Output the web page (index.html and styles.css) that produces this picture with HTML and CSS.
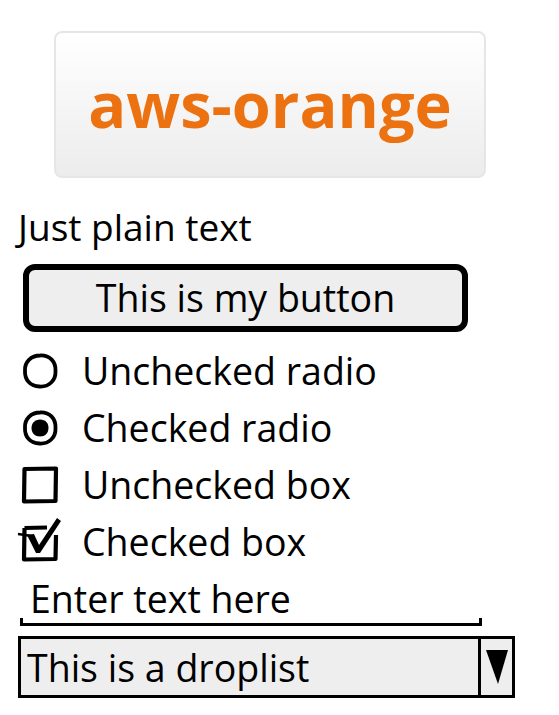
FILE: index.html
```html
<!DOCTYPE html>
<html>
<head>
<meta charset="utf-8">
<link rel="stylesheet" href="styles.css">
</head>
<body>
<div class="page">
  <div class="title-box"><span class="title">aws-orange</span></div>
  <div class="row plain">Just plain text</div>
  <div class="button">This is my button</div>
  <div class="row opt">
    <svg class="ico" width="40" height="40" viewBox="0 0 40 40"><path d="M20 4.5 C30 4 36 11 35.5 20 C36 29.5 29 36 19.5 35.5 C10.5 35.5 4.5 29 5 19.5 C4.5 11 11 4.5 20 4.5 Z" fill="none" stroke="#000" stroke-width="3.8"/></svg>
    <span>Unchecked radio</span>
  </div>
  <div class="row opt">
    <svg class="ico" width="40" height="40" viewBox="0 0 40 40"><path d="M20 4.5 C30 4 36 11 35.5 20 C36 29.5 29 36 19.5 35.5 C10.5 35.5 4.5 29 5 19.5 C4.5 11 11 4.5 20 4.5 Z" fill="none" stroke="#000" stroke-width="3.8"/><path d="M20 11.5 C25.5 11.5 28.5 15 28.5 20 C28.5 25 25 28.5 20 28.5 C15 28.5 11.5 25 11.5 20 C11.5 15 15 11.5 20 11.5 Z" fill="#000"/></svg>
    <span>Checked radio</span>
  </div>
  <div class="row opt">
    <svg class="ico" width="40" height="40" viewBox="0 0 40 40"><path d="M4.5 4 L36 3.5 L35.5 36 L4 36.5 Z" fill="none" stroke="#000" stroke-width="4.2" stroke-linejoin="round"/></svg>
    <span>Unchecked box</span>
  </div>
  <div class="row opt">
    <svg class="ico" width="40" height="40" viewBox="0 0 40 40" overflow="visible"><path d="M4.5 6 L27 5.5 M36 13 L35.5 37 L4 37.5 L4.5 6" fill="none" stroke="#000" stroke-width="4.2" stroke-linejoin="round"/><path d="M-2 12 L12 14" fill="none" stroke="#000" stroke-width="2.5"/><path d="M7 13 L14 12 L19 23 L37 -4 L41 -1 L20 31 L16 31 Z" fill="#000"/></svg>
    <span>Checked box</span>
  </div>
  <div class="field"><span>Enter text here</span></div>
  <div class="drop">
    <span class="drop-text">This is a droplist</span>
    <span class="drop-btn"><svg width="22" height="36" viewBox="0 0 22 36"><path d="M0 1 L22 1 L12 35 Z" fill="#000"/></svg></span>
  </div>
</div>
</body>
</html>
```
FILE: styles.css
```css
html, body {
  margin: 0;
  padding: 0;
  background: #fff;
}
body {
  font-family: "Open Sans", "Noto Sans", sans-serif;
  font-size: 37.5px;
  color: #000;
}
.page {
  width: 559px;
  height: 715px;
  overflow: hidden;
  display: flex;
  flex-direction: column;
  align-items: flex-start;
}
.title-box {
  margin: 31px 0 0 54px;
  width: 428px;
  height: 143px;
  border: 2px solid #e6e6e6;
  border-radius: 8px;
  background: linear-gradient(#ffffff, #ececec);
  display: flex;
  align-items: center;
  justify-content: center;
}
.title {
  font-weight: 700;
  font-size: 63px;
  color: #ec7211;
  line-height: 1;
  margin-top: -2px;
}
.row {
  height: 57px;
  line-height: 57px;
  white-space: nowrap;
}
.plain {
  margin: 20px 0 0 18px;
  font-size: 37px;
}
.button {
  margin: 9px 0 0 23px;
  width: 433px;
  height: 56px;
  line-height: 56px;
  border: 6px solid #000;
  border-radius: 12px;
  background: #eeeeee;
  text-align: center;
  white-space: nowrap;
}
.opt {
  margin-left: 20px;
  display: flex;
  align-items: center;
  gap: 22px;
}
.button + .opt {
  margin-top: 10px;
}
.ico {
  display: block;
  flex: none;
  position: relative;
  top: 0;
}
.field {
  margin-left: 20px;
  width: 462px;
  height: 53px;
  line-height: 57px;
  border-bottom: 3px solid #000;
  position: relative;
  white-space: nowrap;
}
.field span {
  padding-left: 10px;
}
.field::before, .field::after {
  content: "";
  position: absolute;
  bottom: -3px;
  width: 3px;
  height: 8px;
  background: #000;
}
.field::before { left: 0; }
.field::after { right: 0; }
.drop {
  margin: 10px 0 0 18px;
  width: 491px;
  height: 56px;
  border: 3px solid #000;
  background: #eeeeee;
  display: flex;
}
.drop-text {
  flex: 1;
  line-height: 57px;
  padding-left: 6px;
  margin-top: 0;
  white-space: nowrap;
}
.drop-btn {
  width: 31px;
  border-left: 3px solid #000;
  display: flex;
  align-items: center;
  justify-content: center;
}
```
